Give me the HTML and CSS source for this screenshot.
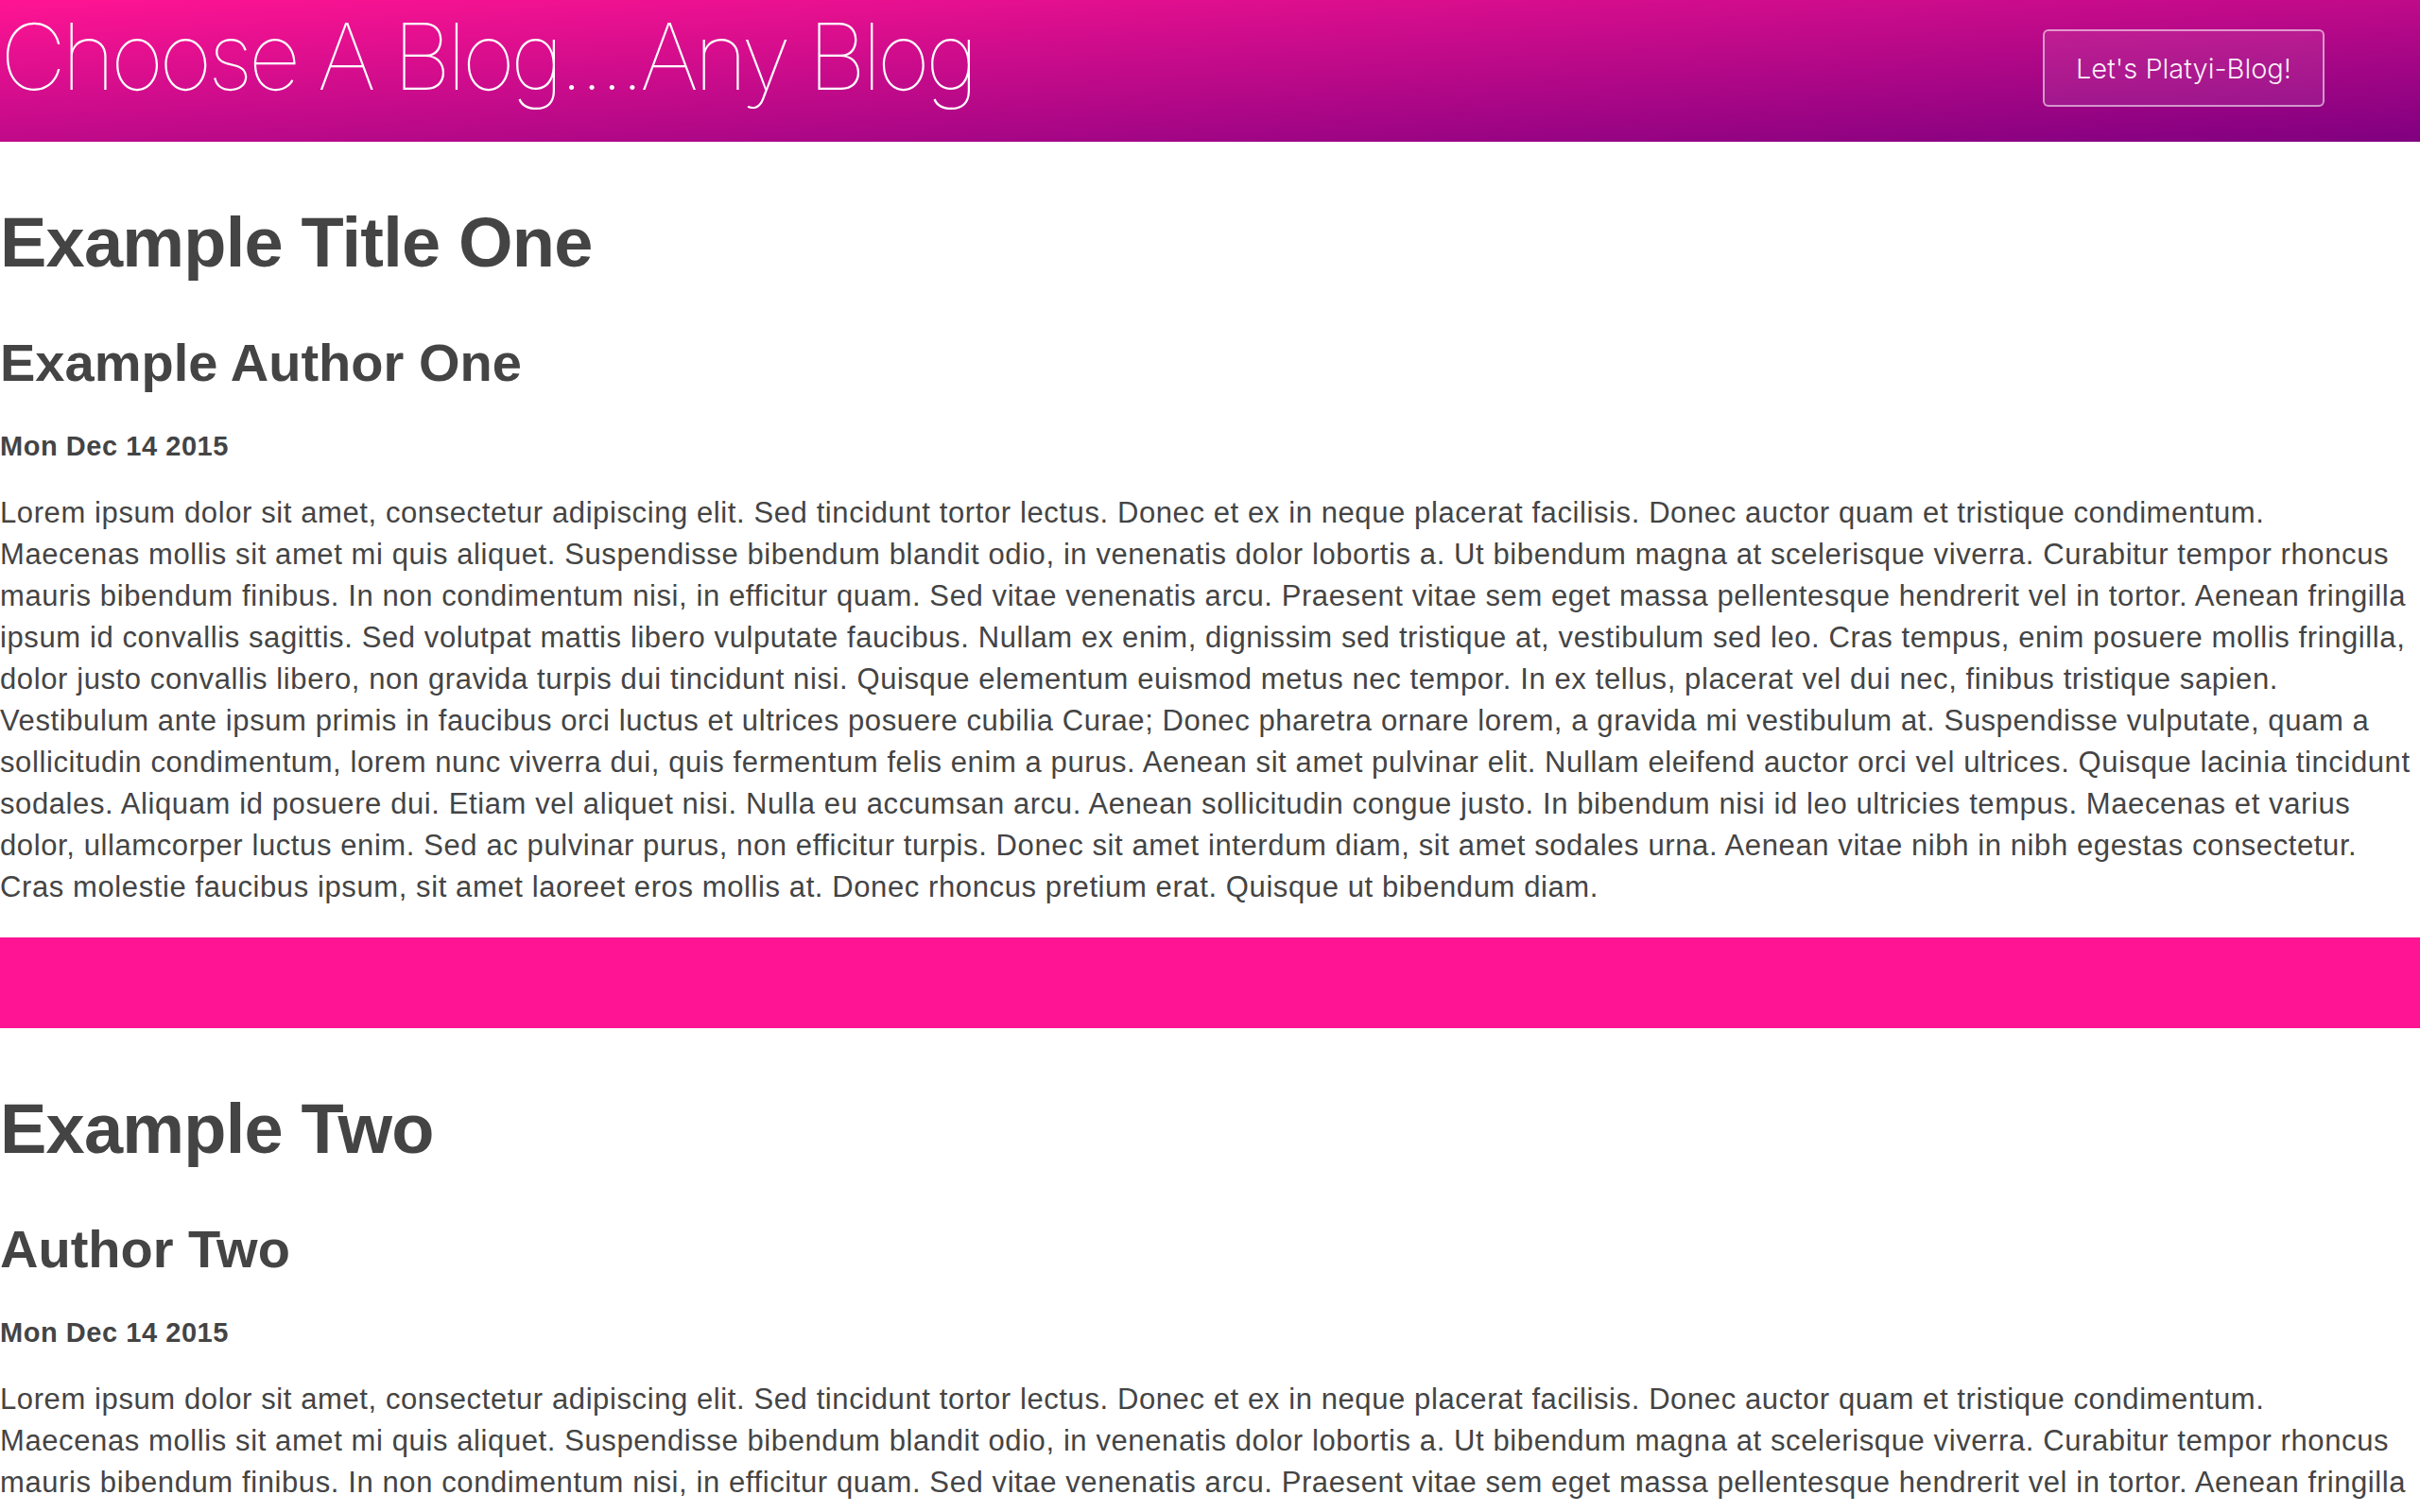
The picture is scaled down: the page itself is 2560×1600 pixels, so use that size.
FILE: index.html
```html
<!DOCTYPE html>
<html lang="en">
<head>
<meta charset="utf-8">
<title>Choose A Blog....Any Blog</title>
<link rel="stylesheet" href="styles.css">
</head>
<body>
<header class="site-header">
  <h1 class="site-title">Choose A Blog....Any Blog</h1>
  <button class="cta">Let's Platyi-Blog!</button>
</header>
<main>
  <article class="post">
    <h1 class="post-title">Example Title One</h1>
    <h2 class="post-author">Example Author One</h2>
    <h4 class="post-date">Mon Dec 14 2015</h4>
    <p class="post-body">Lorem ipsum dolor sit amet, consectetur adipiscing elit. Sed tincidunt tortor lectus. Donec et ex in neque placerat facilisis. Donec auctor quam et tristique condimentum.<br>
Maecenas mollis sit amet mi quis aliquet. Suspendisse bibendum blandit odio, in venenatis dolor lobortis a. Ut bibendum magna at scelerisque viverra. Curabitur tempor rhoncus<br>
mauris bibendum finibus. In non condimentum nisi, in efficitur quam. Sed vitae venenatis arcu. Praesent vitae sem eget massa pellentesque hendrerit vel in tortor. Aenean fringilla<br>
ipsum id convallis sagittis. Sed volutpat mattis libero vulputate faucibus. Nullam ex enim, dignissim sed tristique at, vestibulum sed leo. Cras tempus, enim posuere mollis fringilla,<br>
dolor justo convallis libero, non gravida turpis dui tincidunt nisi. Quisque elementum euismod metus nec tempor. In ex tellus, placerat vel dui nec, finibus tristique sapien.<br>
Vestibulum ante ipsum primis in faucibus orci luctus et ultrices posuere cubilia Curae; Donec pharetra ornare lorem, a gravida mi vestibulum at. Suspendisse vulputate, quam a<br>
sollicitudin condimentum, lorem nunc viverra dui, quis fermentum felis enim a purus. Aenean sit amet pulvinar elit. Nullam eleifend auctor orci vel ultrices. Quisque lacinia tincidunt<br>
sodales. Aliquam id posuere dui. Etiam vel aliquet nisi. Nulla eu accumsan arcu. Aenean sollicitudin congue justo. In bibendum nisi id leo ultricies tempus. Maecenas et varius<br>
dolor, ullamcorper luctus enim. Sed ac pulvinar purus, non efficitur turpis. Donec sit amet interdum diam, sit amet sodales urna. Aenean vitae nibh in nibh egestas consectetur.<br>
Cras molestie faucibus ipsum, sit amet laoreet eros mollis at. Donec rhoncus pretium erat. Quisque ut bibendum diam.</p>
  </article>
  <div class="divider"></div>
  <article class="post">
    <h1 class="post-title">Example Two</h1>
    <h2 class="post-author">Author Two</h2>
    <h4 class="post-date">Mon Dec 14 2015</h4>
    <p class="post-body">Lorem ipsum dolor sit amet, consectetur adipiscing elit. Sed tincidunt tortor lectus. Donec et ex in neque placerat facilisis. Donec auctor quam et tristique condimentum.<br>
Maecenas mollis sit amet mi quis aliquet. Suspendisse bibendum blandit odio, in venenatis dolor lobortis a. Ut bibendum magna at scelerisque viverra. Curabitur tempor rhoncus<br>
mauris bibendum finibus. In non condimentum nisi, in efficitur quam. Sed vitae venenatis arcu. Praesent vitae sem eget massa pellentesque hendrerit vel in tortor. Aenean fringilla<br>
ipsum id convallis sagittis. Sed volutpat mattis libero vulputate faucibus. Nullam ex enim, dignissim sed tristique at, vestibulum sed leo. Cras tempus, enim posuere mollis fringilla,<br>
dolor justo convallis libero, non gravida turpis dui tincidunt nisi. Quisque elementum euismod metus nec tempor. In ex tellus, placerat vel dui nec, finibus tristique sapien.<br>
Vestibulum ante ipsum primis in faucibus orci luctus et ultrices posuere cubilia Curae; Donec pharetra ornare lorem, a gravida mi vestibulum at. Suspendisse vulputate, quam a<br>
sollicitudin condimentum, lorem nunc viverra dui, quis fermentum felis enim a purus. Aenean sit amet pulvinar elit. Nullam eleifend auctor orci vel ultrices. Quisque lacinia tincidunt<br>
sodales. Aliquam id posuere dui. Etiam vel aliquet nisi. Nulla eu accumsan arcu. Aenean sollicitudin congue justo. In bibendum nisi id leo ultricies tempus. Maecenas et varius<br>
dolor, ullamcorper luctus enim. Sed ac pulvinar purus, non efficitur turpis. Donec sit amet interdum diam, sit amet sodales urna. Aenean vitae nibh in nibh egestas consectetur.<br>
Cras molestie faucibus ipsum, sit amet laoreet eros mollis at. Donec rhoncus pretium erat. Quisque ut bibendum diam.</p>
  </article>
  <div class="divider"></div>
</main>
</body>
</html>
```
FILE: styles.css
```css
html, body {
  margin: 0;
  padding: 0;
  background: #ffffff;
}

body {
  font-family: "Liberation Sans", Arial, sans-serif;
  color: #444444;
}

.site-header {
  height: 150px;
  display: flex;
  justify-content: space-between;
  align-items: flex-start;
  background: linear-gradient(to bottom right, #ff1493, #800080);
}

.site-title {
  margin: 2px 0 0 0;
  font-family: Inter, "Liberation Sans", sans-serif;
  font-weight: 100;
  font-size: 97px;
  line-height: 115px;
  color: #ffffff;
  letter-spacing: -4.85px;
  white-space: nowrap;
}

.cta {
  margin: 31px 101px 0 0;
  width: 298px;
  height: 82px;
  padding: 0;
  border: 2px solid rgba(255, 255, 255, 0.55);
  border-radius: 6px;
  background: rgba(255, 255, 255, 0.08);
  color: rgba(255, 255, 255, 0.95);
  font-family: Inter, "Liberation Sans", sans-serif;
  font-weight: 300;
  font-size: 29px;
  cursor: pointer;
}

.post {
  padding-bottom: 31px;
}

.post-title {
  margin: 63px 0 49px 0;
  font-size: 74px;
  line-height: 88px;
  font-weight: bold;
  letter-spacing: -0.8px;
}

.post-author {
  margin: 0 0 37px 0;
  font-size: 56px;
  line-height: 68px;
  font-weight: bold;
}

.post-date {
  margin: 0 0 32px 0;
  font-size: 29px;
  line-height: 34px;
  font-weight: bold;
  letter-spacing: 0.55px;
}

.post-body {
  margin: 0;
  font-size: 31px;
  line-height: 44px;
  letter-spacing: 0.6px;
}

.divider {
  height: 96px;
  background: #ff1493;
}
```
